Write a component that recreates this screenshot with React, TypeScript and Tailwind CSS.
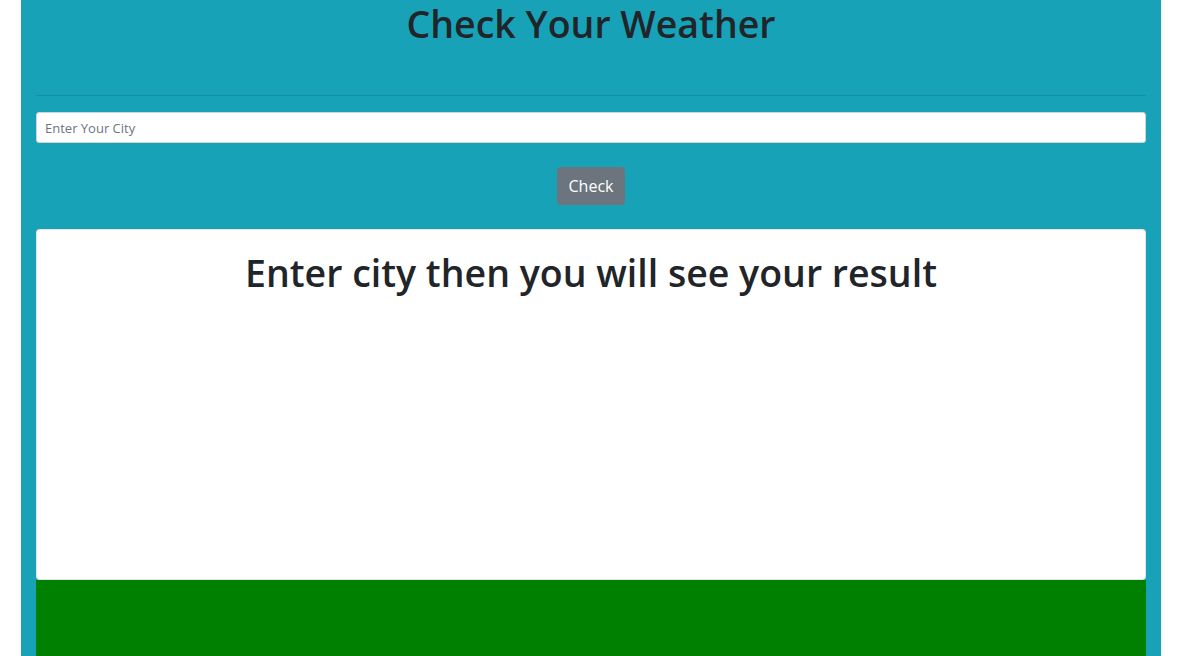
export default function App() {
  return (
    <div className="min-h-screen bg-white font-['Open_Sans',sans-serif] text-[#212529]">
      <div className="ml-[21px] w-[1140px] bg-[#17a2b8] px-[15px]">
        {/* Title */}
        <h1 className="text-center text-[37.5px] font-semibold leading-[48px]">Check Your Weather</h1>
        <div className="h-[47px]" />
        <hr className="border-t border-black/10" />

        {/* Search */}
        <div className="pt-4">
          <input
            type="text"
            placeholder="Enter Your City"
            className="h-[31px] w-full rounded-[3px] border border-[#ced4da] bg-white px-2 text-[13px] text-[#495057] placeholder:text-[#6c757d] outline-none"
          />
        </div>
        <div className="flex justify-center pt-6">
          <button className="h-[38px] rounded-[4px] bg-[#6c757d] px-3 text-[16px] text-white">Check</button>
        </div>

        {/* Result */}
        <div className="mt-6 h-[351px] rounded-[4px] border border-black/10 bg-white pt-[19px]">
          <h2 className="text-center text-[37.5px] font-semibold leading-[48px]">Enter city then you will see your result</h2>
        </div>
        <div className="h-[80px] bg-[#008000]" />
      </div>
    </div>
  )
}
